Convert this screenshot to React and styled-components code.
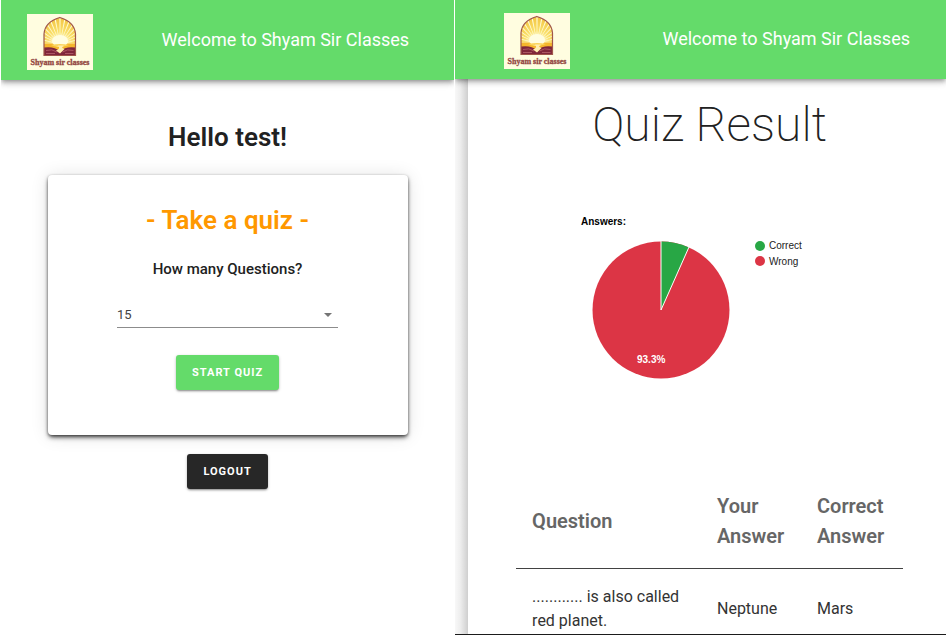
import React from "react";
import styled, { createGlobalStyle } from "styled-components";

const GlobalStyle = createGlobalStyle`
  *, *::before, *::after { box-sizing: border-box; }
  body {
    margin: 0;
    background: #fff;
    color: #212121;
    font-family: Roboto, "Liberation Sans", sans-serif;
  }
  h1, h2, h3, p { margin: 0; }
`;

const Screens = styled.div`
  display: grid;
  grid-template-columns: minmax(0, 12fr) minmax(0, 13fr);
  gap: 1px;
  height: 100vh;
  padding-left: 1px;
  overflow: hidden;
`;

const Screen = styled.section`
  display: flex;
  flex-direction: column;
  min-height: 0;
  overflow: hidden;
  border-bottom: ${(p) => (p.$framed ? "1px solid #1b1b1b" : "0")};
`;

const Bar = styled.header`
  display: flex;
  flex: none;
  align-items: center;
  justify-content: space-between;
  height: ${(p) => p.$height};
  padding: ${(p) => p.$padding};
  background: #64db6a;
  color: #fff;
  box-shadow: 0 2px 4px -1px rgba(0, 0, 0, 0.3), 0 4px 5px rgba(0, 0, 0, 0.14),
    0 1px 10px rgba(0, 0, 0, 0.12);
  z-index: 1;
`;

const BarTitle = styled.p`
  padding-bottom: 4px;
  font-size: 18px;
  line-height: 24px;
  font-weight: 400;
`;

const LogoArt = styled.svg`
  display: block;
  flex: none;
  width: 66px;
  height: 56px;
`;

const Home = styled.main`
  display: flex;
  flex-direction: column;
  align-items: center;
  padding: 41px 24px;
`;

const Greeting = styled.h1`
  font-size: 26px;
  line-height: 32px;
  font-weight: 600;
`;

const QuizCard = styled.form`
  display: flex;
  flex-direction: column;
  align-items: center;
  width: 100%;
  max-width: 360px;
  margin: 22px 0 19px;
  padding: 29px 24px 45px;
  border-radius: 4px;
  background: #fff;
  box-shadow: 0 3px 5px -1px rgba(0, 0, 0, 0.7), 0 1px 3px rgba(0, 0, 0, 0.4),
    0 1px 18px rgba(0, 0, 0, 0.12);
`;

const CardTitle = styled.h2`
  color: #ff9800;
  font-size: 26px;
  line-height: 32px;
  font-weight: 600;
`;

const CountLabel = styled.label`
  margin-top: 23px;
  font-size: 15px;
  line-height: 20px;
  font-weight: 500;
`;

const SelectField = styled.div`
  display: flex;
  align-items: center;
  width: 221px;
  margin: 23px 0 27px;
  border-bottom: 1px solid #8c8c8c;
`;

const CountSelect = styled.select`
  flex: 1;
  height: 25px;
  margin-right: -20px;
  padding: 0 20px 0 0;
  border: 0;
  appearance: none;
  background: transparent;
  color: #424242;
  font: 400 13px/24px Roboto, "Liberation Sans", sans-serif;
`;

const Caret = styled.svg`
  width: 8px;
  height: 4px;
  margin: 0 6px;
  pointer-events: none;
`;

const Button = styled.button`
  height: 35px;
  padding: 0 16px;
  border: 0;
  border-radius: 3px;
  background: ${(p) => (p.$dark ? "#272727" : "#64db6a")};
  color: #fff;
  font: 700 11px/16px Roboto, "Liberation Sans", sans-serif;
  letter-spacing: 1px;
  text-transform: uppercase;
  box-shadow: 0 2px 2px -1px rgba(0, 0, 0, 0.3), 0 1px 3px rgba(0, 0, 0, 0.25);
`;

const ResultArea = styled.div`
  display: flex;
  flex: 1;
  min-height: 0;
`;

const Gutter = styled.div`
  flex: none;
  width: 13px;
  background: linear-gradient(to right, #f8f8f8, #eeeeee 40%, #cfcfcf);
`;

const Result = styled.main`
  display: flex;
  flex: 1;
  flex-direction: column;
  align-items: center;
  min-width: 0;
  padding: 0 43px 0 48px;
`;

const ResultTitle = styled.h1`
  font-size: 48px;
  line-height: 92px;
  font-weight: 200;
`;

const Chart = styled.svg`
  display: block;
  flex: none;
  width: 280px;
  height: 305px;
  font-family: "Liberation Sans", Arial, sans-serif;
  font-size: 10px;
`;

const Answers = styled.table`
  width: 100%;
  border-collapse: collapse;
  text-align: left;
`;

const HeadCell = styled.th`
  width: ${(p) => p.$width};
  padding: 15px 16px 17px;
  border-bottom: 1px solid #424242;
  color: #666;
  font-size: 20px;
  line-height: 30px;
  font-weight: 600;
`;

const Cell = styled.td`
  padding: 16px;
  color: #333;
  font-size: 16px;
  line-height: 24px;
  font-weight: 400;
`;

const rays = Array.from({ length: 17 }, (_, i) => {
  const at = (deg) => {
    const a = (deg * Math.PI) / 180;
    return `${33 - 34 * Math.cos(a)} ${30 - 34 * Math.sin(a)}`;
  };
  const mid = 2 + i * 11;
  return `M33 30L${at(mid - 1.5)}L${at(mid + 1.5)}Z`;
}).join("");

function Logo({ id }) {
  const arch = "M17 41.500V20C17.500 12 23 6.500 32.800 3.500C42.500 6.500 48 12 48.500 20V41.500Z";
  return (
    <LogoArt viewBox="0 0 66 56" role="img" aria-label="Shyam sir classes">
      <clipPath id={id}>
        <path d={arch} />
      </clipPath>
      <radialGradient
        id={`${id}-glow`}
        gradientUnits="userSpaceOnUse"
        cx="33"
        cy="30"
        r="25"
      >
        <stop offset="0.2" stopColor="#fffde0" />
        <stop offset="0.5" stopColor="#fae06c" />
        <stop offset="1" stopColor="#f3c644" />
      </radialGradient>
      <rect width="66" height="56" fill="#fffde0" />
      <g clipPath={`url(#${id})`}>
        <path d={arch} fill={`url(#${id}-glow)`} />
        <path d={rays} fill="#fffad0" />
        <path d="M17 29.500H48.500V36H17Z" fill="#f5b62c" />
        <ellipse cx="33" cy="27" rx="8" ry="6" fill="#fffde0" />
        <path d="M24 31Q33 29 42 31L37 32.500H28Z" fill="#fbd55c" />
        <path
          d="M17 33.500Q27 32 32.800 37Q39 32 48.500 33.500V42H17Z"
          fill="#80263a"
        />
        <path
          d="M19 36.500Q25 34.500 30 38M46.500 36.500Q40 34.500 35.500 38M19 39.500H28M38 39.500H46.500"
          fill="none"
          stroke="#b8656c"
          strokeWidth="0.8"
        />
        <path
          d="M31 31.500H37Q33 33.500 37.500 35L33 39.500L29 36.500Q34 34.500 31 31.500Z"
          fill="#ffeeb0"
        />
      </g>
      <path d={arch} fill="none" stroke="#a0564a" strokeWidth="1.2" />
      <text
        x="33"
        y="51"
        textAnchor="middle"
        fill="#934641"
        stroke="#934641"
        strokeWidth="0.3"
        fontFamily="Liberation Serif, serif"
        fontWeight="700"
        fontSize="8"
      >
        Shyam sir classes
      </text>
    </LogoArt>
  );
}

function PieChart() {
  return (
    <Chart viewBox="0 0 280 305" role="img" aria-label="Answers: 93.3% wrong">
      <text x="11" y="54" fontWeight="700">
        Answers:
      </text>
      <circle cx="91" cy="139" r="68.500" fill="#dc3545" />
      <path
        d="M91 139V70.500A68.500 68.500 0 0 1 118.860 76.420Z"
        fill="#28a745"
      />
      <path d="M91 70V139L119 76" fill="none" stroke="#fff" />
      <text x="67" y="192" fill="#fff" fontWeight="700">
        93.3%
      </text>
      <circle cx="190" cy="75" r="5" fill="#28a745" />
      <text x="199" y="78" fill="#222">
        Correct
      </text>
      <circle cx="190" cy="90" r="5" fill="#dc3545" />
      <text x="199" y="94" fill="#222">
        Wrong
      </text>
    </Chart>
  );
}

const results = [
  {
    question: "............ is also called red planet.",
    given: "Neptune",
    correct: "Mars",
  },
];

export default function App() {
  return (
    <>
      <GlobalStyle />
      <Screens>
        <Screen>
          <Bar $height="80px" $padding="4px 45px 0 26px">
            <Logo id="home-arch" />
            <BarTitle>Welcome to Shyam Sir Classes</BarTitle>
          </Bar>
          <Home>
            <Greeting>Hello test!</Greeting>
            <QuizCard onSubmit={(e) => e.preventDefault()}>
              <CardTitle>- Take a quiz -</CardTitle>
              <CountLabel htmlFor="count">How many Questions?</CountLabel>
              <SelectField>
                <CountSelect id="count" defaultValue="15">
                  <option>5</option>
                  <option>10</option>
                  <option>15</option>
                  <option>20</option>
                </CountSelect>
                <Caret viewBox="0 0 8 4" aria-hidden="true">
                  <path d="M0 0H8L4 4Z" fill="#757575" />
                </Caret>
              </SelectField>
              <Button type="submit">Start quiz</Button>
            </QuizCard>
            <Button type="button" $dark>
              Logout
            </Button>
          </Home>
        </Screen>
        <Screen $framed>
          <Bar $height="79px" $padding="3px 36px 0 49px">
            <Logo id="result-arch" />
            <BarTitle>Welcome to Shyam Sir Classes</BarTitle>
          </Bar>
          <ResultArea>
            <Gutter />
            <Result>
              <ResultTitle>Quiz Result</ResultTitle>
              <PieChart />
              <Answers>
                <thead>
                  <tr>
                    <HeadCell scope="col">Question</HeadCell>
                    <HeadCell scope="col" $width="100px">
                      Your Answer
                    </HeadCell>
                    <HeadCell scope="col" $width="102px">
                      Correct Answer
                    </HeadCell>
                  </tr>
                </thead>
                <tbody>
                  {results.map((r) => (
                    <tr key={r.question}>
                      <Cell>{r.question}</Cell>
                      <Cell>{r.given}</Cell>
                      <Cell>{r.correct}</Cell>
                    </tr>
                  ))}
                </tbody>
              </Answers>
            </Result>
          </ResultArea>
        </Screen>
      </Screens>
    </>
  );
}
